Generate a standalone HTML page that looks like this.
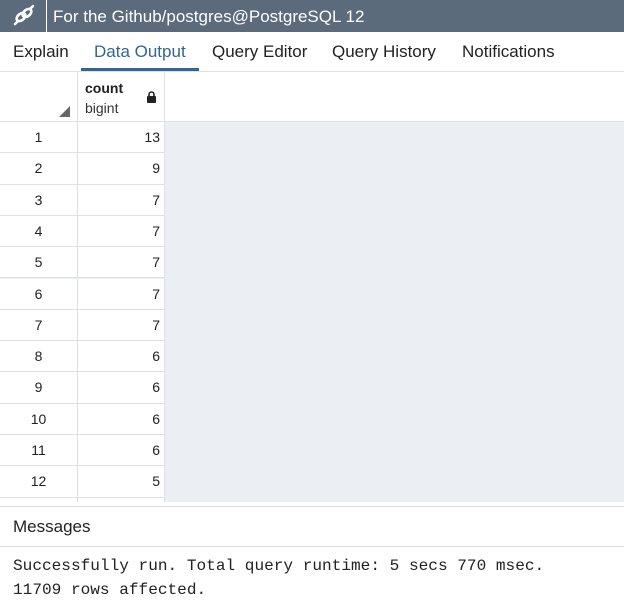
<!DOCTYPE html>
<html><head><style>
*{margin:0;padding:0;box-sizing:border-box}
body{width:624px;height:608px;overflow:hidden;background:#fff;font-family:"Liberation Sans",sans-serif;position:relative}
.title{position:absolute;left:0;top:0;width:624px;height:32px;background:#5b6b7c;color:#fff;font-size:17px}
.title .ic{position:absolute;left:0;top:0;width:47px;height:32px;border-right:1px solid #fff}
.title span{position:absolute;left:53px;top:7px}
.tabs{position:absolute;top:32px;left:0;width:624px;height:40px;border-bottom:1px solid #dde0e6;font-size:17px;color:#222}
.tabs div{position:absolute;top:10px}
.ul{position:absolute;left:81px;top:68px;width:118px;height:3px;background:#326690}
.grid{position:absolute;left:0;top:72px;width:624px;height:430px;background:#ebeef3}
.hdr{position:absolute;left:0;top:0;width:624px;height:50px;background:#fff;border-bottom:1px solid #dde0e6}
.c1{position:absolute;left:0;width:78px;border-right:1px solid #dde0e6;background:#fff}
.c2{position:absolute;left:78px;width:87px;border-right:1px solid #dde0e6;background:#fff}
.row{position:absolute;left:0;width:165px;height:31.3px;font-size:14px;color:#222}
.row .a,.row .b{position:absolute;top:0;height:31.3px;border-bottom:1px solid #dde0e6;line-height:30px;background:#fff}
.row .a{left:0;width:78px;text-align:center;border-right:1px solid #dde0e6}
.row .b{left:78px;width:87px;text-align:right;padding-right:4px;border-right:1px solid #dde0e6}
.msg{position:absolute;left:0;top:506px;width:624px;height:102px;border-top:1px solid #dde0e6}
.msg .h{height:40px;border-bottom:1px solid #dde0e6;font-size:17px;padding:10px 0 0 13px;color:#222}
.msg pre{font-family:"Liberation Mono",monospace;font-size:16.1px;line-height:24px;padding:7px 0 0 13px;color:#222}
</style></head><body>
<div class="title"><div class="ic"><svg width="47" height="32" viewBox="0 0 47 32"><g fill="none" stroke="#fff" stroke-width="2.6" stroke-linecap="round"><ellipse cx="21" cy="17" rx="5" ry="3.2" transform="rotate(-40 21 17)"/><ellipse cx="27" cy="13" rx="5" ry="3.2" transform="rotate(-40 27 13)"/><path d="M15 24l3-3M30 9l3-3"/></g></svg></div><span>For the Github/postgres@PostgreSQL 12</span></div>
<div class="tabs"><div style="left:13px">Explain</div><div style="left:94px;color:#326690">Data Output</div><div style="left:212px">Query Editor</div><div style="left:332px">Query History</div><div style="left:462px">Notifications</div></div>
<div class="ul"></div>
<div class="grid">
<div class="hdr">
<div class="c1" style="top:0;height:49px"><div style="position:absolute;left:59px;top:34px;width:0;height:0;border-left:11px solid transparent;border-bottom:11px solid #666"></div></div>
<div class="c2" style="top:0;height:49px"><div style="position:absolute;left:7px;top:8px;font-size:14px;font-weight:bold;color:#222">count</div><div style="position:absolute;left:7px;top:28px;font-size:14px;color:#333">bigint</div>
<svg style="position:absolute;left:68px;top:19px" width="11" height="12" viewBox="0 0 11 12"><path d="M3 5V3.5a2.5 2.5 0 0 1 5 0V5" stroke="#222" stroke-width="1.6" fill="none"/><rect x="1" y="5" width="9" height="7" rx="1" fill="#222"/></svg></div>
</div>
<div class="row" style="top:50px"><div class="a">1</div><div class="b">13</div></div>
<div class="row" style="top:81.3px"><div class="a">2</div><div class="b">9</div></div>
<div class="row" style="top:112.6px"><div class="a">3</div><div class="b">7</div></div>
<div class="row" style="top:143.9px"><div class="a">4</div><div class="b">7</div></div>
<div class="row" style="top:175.2px"><div class="a">5</div><div class="b">7</div></div>
<div class="row" style="top:206.5px"><div class="a">6</div><div class="b">7</div></div>
<div class="row" style="top:237.8px"><div class="a">7</div><div class="b">7</div></div>
<div class="row" style="top:269.1px"><div class="a">8</div><div class="b">6</div></div>
<div class="row" style="top:300.4px"><div class="a">9</div><div class="b">6</div></div>
<div class="row" style="top:331.7px"><div class="a">10</div><div class="b">6</div></div>
<div class="row" style="top:363px"><div class="a">11</div><div class="b">6</div></div>
<div class="row" style="top:394.3px"><div class="a">12</div><div class="b">5</div></div>
<div class="row" style="top:425.6px;height:4.4px"><div class="a" style="height:4.4px;border-bottom:0"></div><div class="b" style="height:4.4px;border-bottom:0"></div></div>
</div>
<div class="msg"><div class="h">Messages</div><pre>Successfully run. Total query runtime: 5 secs 770 msec.
11709 rows affected.</pre></div>
</body></html>
